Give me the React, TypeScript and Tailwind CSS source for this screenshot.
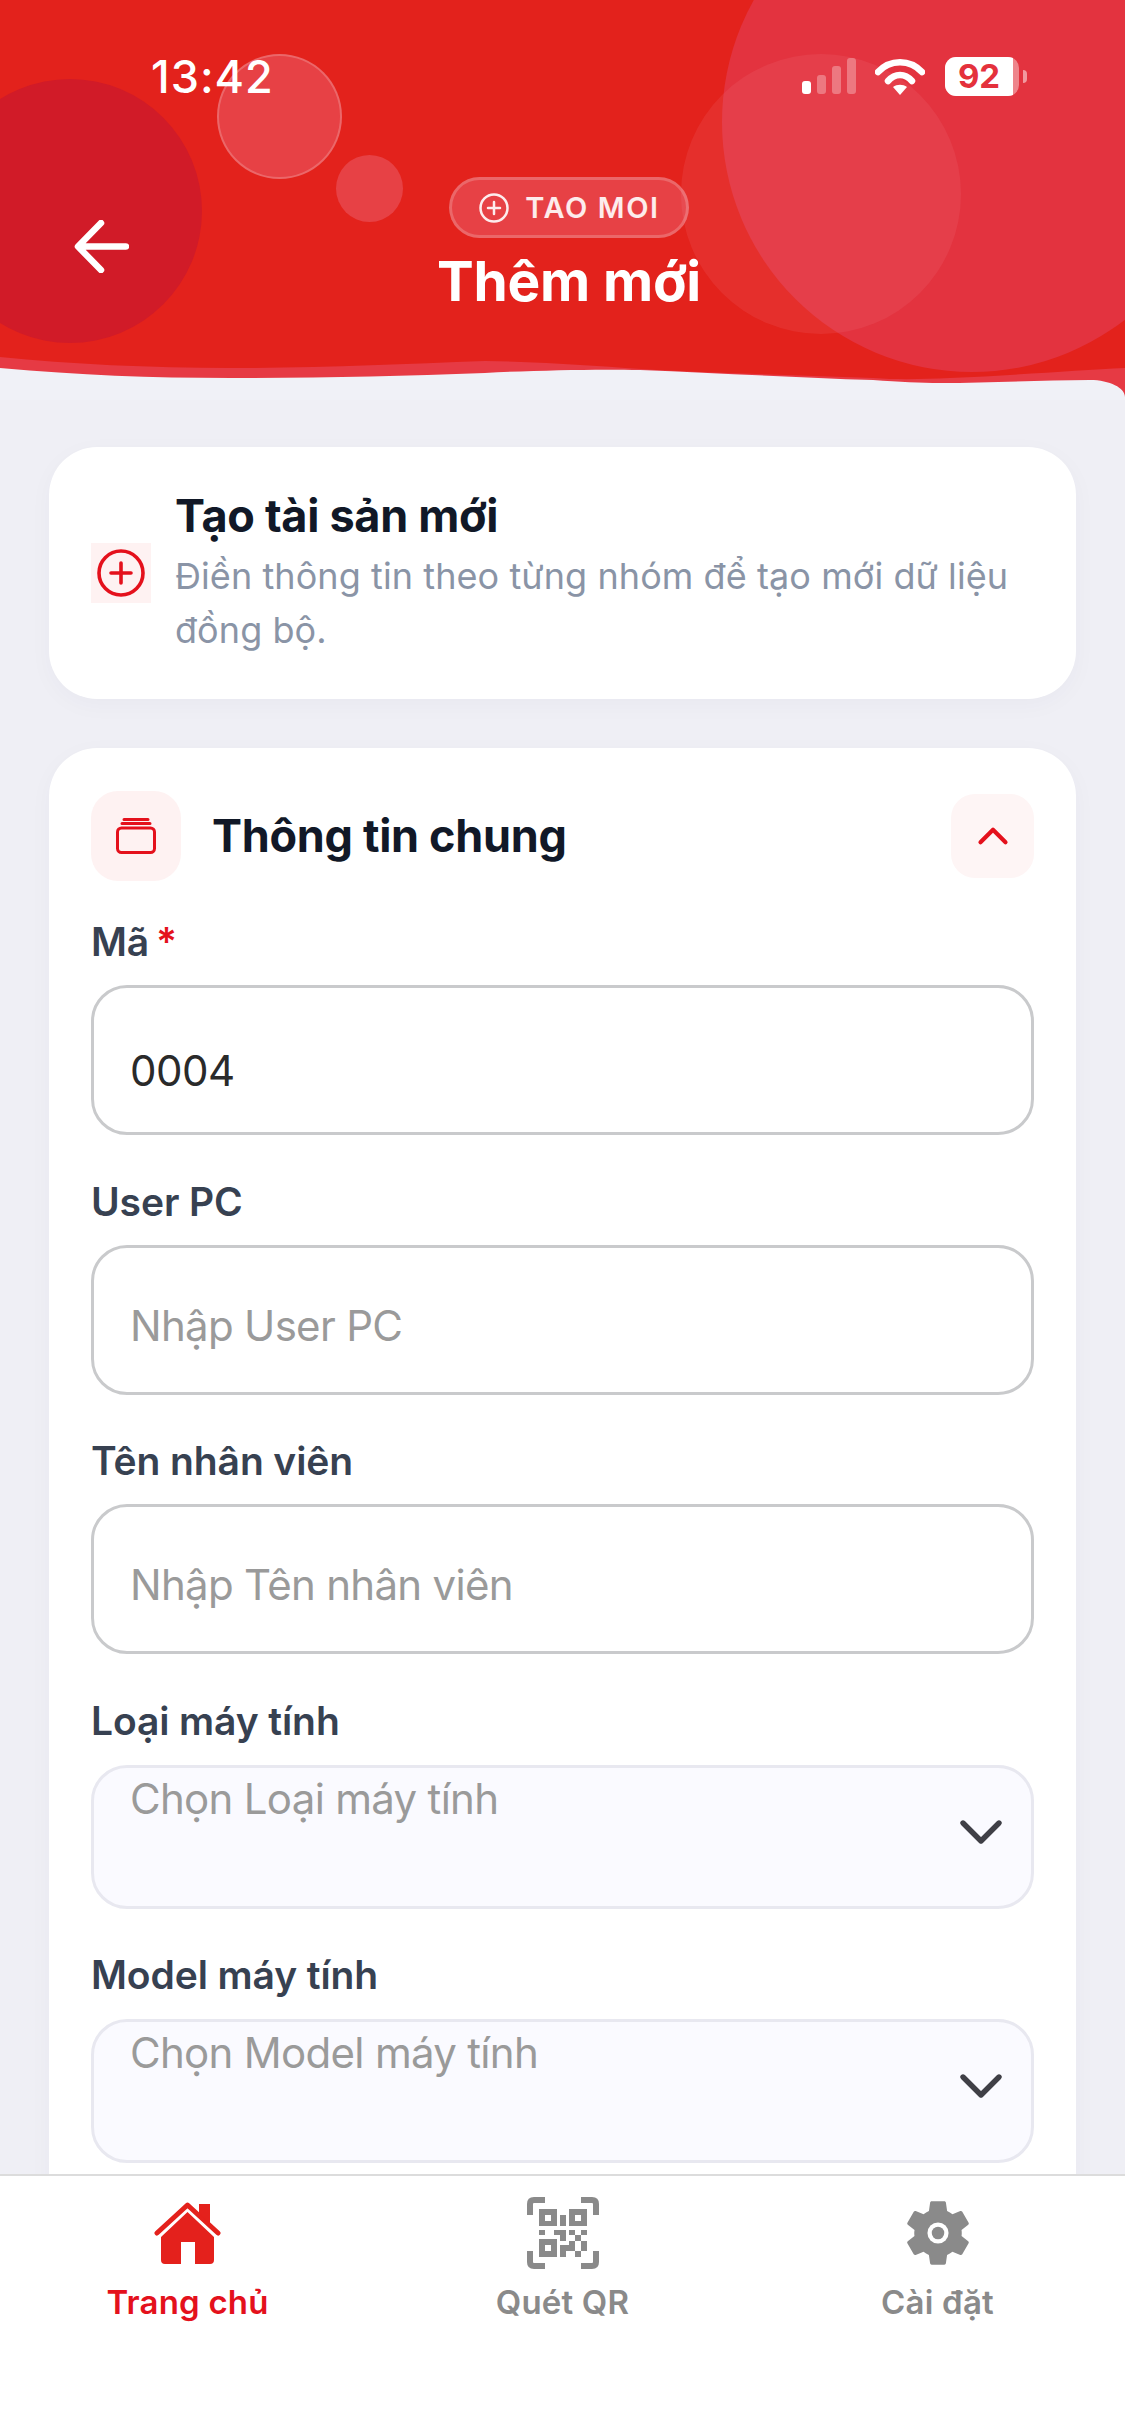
import { ChevronDown, ChevronUp } from "lucide-react";

const font = { fontFamily: "Inter, 'Noto Sans', sans-serif" };

function StatusBar() {
  return (
    <div className="flex items-center justify-between h-[40px] pl-[151px] pr-[98px]">
      <span className="text-[45px] font-medium text-white leading-none tracking-[1px]">13:42</span>
      <div className="flex items-center">
        <div className="flex items-end gap-[6px] h-[36px]">
          <span className="w-[9px] h-[13px] rounded-[3px] bg-white" />
          <span className="w-[9px] h-[19px] rounded-[3px] bg-white/30" />
          <span className="w-[9px] h-[28px] rounded-[3px] bg-white/30" />
          <span className="w-[9px] h-[36px] rounded-[3px] bg-white/30" />
        </div>
        <svg className="ml-[19px]" width="50" height="37" viewBox="0 0 50 37">
          <path d="M3 14 C15 1 35 1 47 14" fill="none" stroke="#fff" strokeWidth="6.5" strokeLinecap="round" />
          <path d="M13 23 C20 15 30 15 37 23" fill="none" stroke="#fff" strokeWidth="6.5" strokeLinecap="round" />
          <path d="M18 29 C22 26 28 26 32 29 L25 37 Z" fill="#fff" />
        </svg>
        <div className="ml-[20px] relative w-[74px] h-[39px] rounded-[11px] bg-white/40 overflow-hidden flex">
          <div className="w-[68px] h-full bg-white flex items-center justify-center">
            <span className="text-[33px] font-bold text-[#e4313c] leading-none">92</span>
          </div>
        </div>
        <div className="ml-[4px] w-[4px] h-[13px] rounded-r-full bg-white/50" />
      </div>
    </div>
  );
}

function Header() {
  return (
    <header className="relative h-[400px] shrink-0 overflow-hidden bg-[#e3221c] pt-[56px]">
      <div className="absolute left-[-62px] top-[79px] w-[264px] h-[264px] rounded-full bg-[#d11b28]" />
      <div className="absolute left-[217px] top-[54px] w-[125px] h-[125px] rounded-full bg-[#f5a0c0]/25 border-2 border-white/20" />
      <div className="absolute left-[336px] top-[155px] w-[67px] h-[67px] rounded-full bg-[#f5a0c0]/25" />
      <div className="absolute left-[722px] top-[-128px] w-[500px] h-[500px] rounded-full bg-[#e3333f]" />
      <div className="absolute left-[681px] top-[54px] w-[280px] h-[280px] rounded-full bg-[#f08090]/15" />

      <svg className="absolute left-0 top-[340px] w-[1125px] h-[60px]" viewBox="0 0 1125 60">
        <path d="M0 17 C70 24 150 28 230 28 C320 28 400 24 485 21 C560 22 640 30 700 32 L873 38 C900 40 925 39 950 38 C1020 35 1080 30 1125 28 L1125 60 L0 60 Z" fill="#e63a44" />
        <path d="M0 28 C80 35 150 38 230 38 C320 38 400 36 485 33 C540 30 600 29 640 30 C720 33 800 38 873 40 C900 42 920 43 940 43 C990 43 1040 40 1090 40 C1110 40 1125 48 1125 57 L1125 60 L0 60 Z" fill="#f0f1f7" />
      </svg>

      <div className="relative">
        <StatusBar />
        <div className="grid grid-cols-[1fr_auto_1fr] mt-[81px]">
          <div className="pl-[74px] pt-[43px]">
            <svg width="55" height="53" viewBox="0 0 55 53" fill="none" stroke="#fff" strokeWidth="6.5" strokeLinecap="round" strokeLinejoin="round">
              <path d="M52 26.5 H5 M27 3 L4 26.5 L27 50" />
            </svg>
          </div>
          <div className="flex flex-col items-center pl-[13px]">
            <div className="flex items-center gap-[16px] h-[61px] pl-[27px] pr-[26px] rounded-full bg-[#f5a0c0]/25 border-[3px] border-white/20">
              <svg width="30" height="30" viewBox="0 0 30 30" fill="none" stroke="#fff" strokeOpacity="0.9" strokeWidth="2.5" strokeLinecap="round">
                <circle cx="15" cy="15" r="13.5" />
                <path d="M15 9 V21 M9 15 H21" />
              </svg>
              <span className="text-[29px] font-semibold tracking-[1.6px] text-white/90 leading-none">TAO MOI</span>
            </div>
            <h1 className="mt-[10px] text-[55px] font-bold text-white leading-[66px] tracking-[-0.2px]">Thêm mới</h1>
          </div>
          <div />
        </div>
      </div>
    </header>
  );
}

function Label({ children, required }: { children: string; required?: boolean }) {
  return (
    <label className="block text-[39px] font-semibold text-[#374151] leading-[48px] tracking-[-0.1px]">
      {children}
      {required && <span className="ml-[-3px] text-[#e4111c]"> *</span>}
    </label>
  );
}

function TextField({ label, value, placeholder, required }: { label: string; value?: string; placeholder?: string; required?: boolean }) {
  return (
    <div>
      <Label required={required}>{label}</Label>
      <div className="mt-[19px] h-[150px] rounded-[36px] border-[3px] border-[#c9cacc] bg-white flex items-center pl-[36px]">
        {value ? (
          <span className="pt-[21px] text-[42px] text-[#2a2a2a] tracking-[-0.5px]">{value}</span>
        ) : (
          <span className="pt-[11px] text-[42px] text-[#9a9a9a] tracking-[-0.7px]">{placeholder}</span>
        )}
      </div>
    </div>
  );
}

function SelectField({ label, placeholder }: { label: string; placeholder: string }) {
  return (
    <div>
      <Label>{label}</Label>
      <div className="mt-[20px] relative h-[144px] rounded-[36px] border-[3px] border-[#e8e8f0] bg-[#fafaff] pl-[36px] pt-[5px]">
        <span className="text-[42px] text-[#9a9a9a] tracking-[-0.7px] leading-[52px]">{placeholder}</span>
        <ChevronDown className="absolute right-[14px] top-[28px] text-[#3f3f46]" size={72} strokeWidth={1.8} />
      </div>
    </div>
  );
}

function Tab({ label, active, children }: { label: string; active?: boolean; children: React.ReactNode }) {
  return (
    <div className="flex flex-col items-center">
      <div className="h-[72px] flex items-center justify-center">{children}</div>
      <span className={active ? "mt-[13px] text-[33px] font-semibold text-[#e4111c] leading-[40px] tracking-[0.2px]" : "mt-[13px] text-[33px] font-semibold text-[#8a8a8a] leading-[40px] tracking-[0.2px]"}>
        {label}
      </span>
    </div>
  );
}

export default function App() {
  return (
    <div className="w-[1125px] h-[2436px] flex flex-col overflow-hidden bg-[#efeff5]" style={font}>
      <Header />
      <main className="flex-1 min-h-0 overflow-hidden px-[49px] pt-[47px]">
        <section className="h-[252px] rounded-[48px] bg-white shadow-[0_6px_24px_rgba(30,30,80,0.03)] flex items-center pl-[42px] pr-[42px] gap-[24px]">
          <div className="w-[60px] h-[60px] shrink-0 bg-[#fef2f2] flex items-center justify-center">
            <svg width="48" height="48" viewBox="0 0 48 48" fill="none" stroke="#e4111c" strokeWidth="3.6" strokeLinecap="round">
              <circle cx="24" cy="24" r="22" />
              <path d="M24 14 V34 M14 24 H34" />
            </svg>
          </div>
          <div>
            <h2 className="text-[45px] font-bold text-[#111827] leading-[54px] tracking-[-0.3px]">Tạo tài sản mới</h2>
            <p className="text-[36px] text-[#8a94a6] leading-[54px] mt-[6px] tracking-[0.08px]">
              Điền thông tin theo từng nhóm để tạo mới dữ liệu đồng bộ.
            </p>
          </div>
        </section>

        <section className="mt-[49px] rounded-[48px] bg-white shadow-[0_6px_24px_rgba(30,30,80,0.03)] px-[42px] pt-[43px] pb-[120px]">
          <div className="flex items-center">
            <div className="w-[90px] h-[90px] rounded-[27px] bg-[#fef2f2] flex items-center justify-center">
              <svg width="40" height="36" viewBox="0 0 40 36" fill="none" stroke="#e4111c" strokeWidth="3" strokeLinecap="round" strokeLinejoin="round">
                <rect x="1.5" y="10" width="37" height="24.5" rx="4" />
                <path d="M6 5.5 H34 M8 1.5 H32" />
              </svg>
            </div>
            <h2 className="ml-[31px] flex-1 text-[45px] font-bold text-[#111827] tracking-[-0.3px]">Thông tin chung</h2>
            <div className="w-[83px] h-[84px] rounded-[24px] bg-[#fef5f5] flex items-center justify-center">
              <ChevronUp className="text-[#e4111c]" size={50} strokeWidth={2} />
            </div>
          </div>
          <div className="mt-[37px] flex flex-col gap-[42.5px]">
            <TextField label="Mã" value="0004" required />
            <TextField label="User PC" placeholder="Nhập User PC" />
            <TextField label="Tên nhân viên" placeholder="Nhập Tên nhân viên" />
            <SelectField label="Loại máy tính" placeholder="Chọn Loại máy tính" />
            <SelectField label="Model máy tính" placeholder="Chọn Model máy tính" />
          </div>
        </section>
      </main>

      <nav className="h-[262px] shrink-0 bg-white border-t-2 border-[#dcdcdc] grid grid-cols-3 pt-[21px]">
        <Tab label="Trang chủ" active>
          <svg width="67" height="62" viewBox="0 0 67 62" fill="#e4211c">
            <path d="M33.5 10 L60 35 V58 Q60 62 56 62 H41 V40 H27 V62 H11 Q7 62 7 58 V35 Z" />
            <path d="M3 31 L33.5 3 L64 31" fill="none" stroke="#e4211c" strokeWidth="5" strokeLinecap="round" strokeLinejoin="round" />
            <path d="M45 2 H56 V22 L45 12 Z" />
          </svg>
        </Tab>
        <Tab label="Quét QR">
          <svg width="72" height="72" viewBox="0 0 72 72" fill="#8a8a8a">
            <g fill="none" stroke="#8a8a8a" strokeWidth="6">
              <path d="M3 18 V7 Q3 3 7 3 H18" />
              <path d="M54 3 H65 Q69 3 69 7 V18" />
              <path d="M3 54 V65 Q3 69 7 69 H18" />
              <path d="M54 69 H65 Q69 69 69 65 V54" />
            </g>
            <path fillRule="evenodd" d="M12 12 H30 V29 H12 Z M18 18 V24 H24 V18 Z" />
            <path fillRule="evenodd" d="M42 12 H60 V29 H42 Z M48 18 V24 H54 V18 Z" />
            <path fillRule="evenodd" d="M12 42 H30 V60 H12 Z M18 48 V54 H24 V48 Z" />
            <path d="M33 18 H39 V29 H33 Z M12 33 H18 V38 H12 Z M27 33 H39 V38 H27 Z M33 38 H39 V44 H33 Z M42 33 H48 V38 H42 Z M54 33 H60 V38 H54 Z M48 38 H54 V44 H48 Z M42 44 H48 V50 H42 Z M54 44 H60 V54 H54 Z M33 48 H48 V54 H33 Z M33 54 H39 V60 H33 Z M48 54 H54 V60 H48 Z" />
          </svg>
        </Tab>
        <Tab label="Cài đặt">
          <svg width="66" height="66" viewBox="2 2 20 20">
            <path fill="#8a8a8a" d="M19.14 12.94c.04-.3.06-.61.06-.94 0-.32-.02-.64-.07-.94l2.03-1.58c.18-.14.23-.41.12-.61l-1.92-3.32c-.12-.22-.37-.29-.59-.22l-2.39.96c-.5-.38-1.03-.7-1.62-.94l-.36-2.54c-.04-.24-.24-.41-.48-.41h-3.84c-.24 0-.43.17-.47.41l-.36 2.54c-.59.24-1.13.57-1.62.94l-2.39-.96c-.22-.08-.47 0-.59.22L2.74 8.87c-.12.21-.08.47.12.61l2.03 1.58c-.05.3-.09.63-.09.94s.02.64.07.94l-2.03 1.58c-.18.14-.23.41-.12.61l1.92 3.32c.12.22.37.29.59.22l2.39-.96c.5.38 1.03.7 1.62.94l.36 2.54c.05.24.24.41.48.41h3.84c.24 0 .44-.17.47-.41l.36-2.54c.59-.24 1.13-.56 1.62-.94l2.39.96c.22.08.47 0 .59-.22l1.92-3.32c.12-.22.07-.47-.12-.61l-2.01-1.58z" />
            <circle cx="12" cy="12" r="3.2" fill="#fff" />
            <circle cx="12" cy="12" r="1.9" fill="#8a8a8a" />
          </svg>
        </Tab>
      </nav>
    </div>
  );
}
